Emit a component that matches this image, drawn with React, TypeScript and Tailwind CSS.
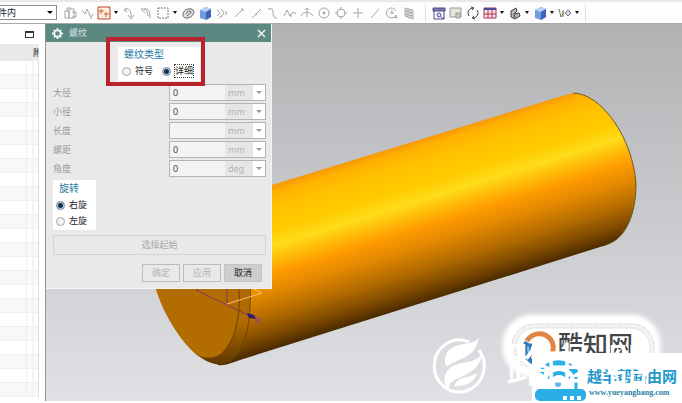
import { useState } from "react";
import type { ReactNode } from "react";

interface Field {
  id: string;
  label: string;
  value: string;
  unit: string;
}

const initialFields: Field[] = [
  { id: "major", label: "大径", value: "0", unit: "mm" },
  { id: "minor", label: "小径", value: "0", unit: "mm" },
  { id: "length", label: "长度", value: "", unit: "mm" },
  { id: "pitch", label: "螺距", value: "0", unit: "mm" },
  { id: "angle", label: "角度", value: "0", unit: "deg" },
];

const cube = (
  <>
    <path d="M2 4 8 1l5 2v8l-5 3-6-2z" fill="#6f9be0" />
    <path d="M2 4 8 1l5 2-5 3z" fill="#b9d2f6" />
    <path d="M8 6l5-3v8l-5 3z" fill="#3f63b8" />
  </>
);

interface Tool {
  name: string;
  color?: string;
  menu?: boolean;
  art: ReactNode;
}

const editTools: Tool[] = [
  { name: "移动组件", art: <path d="M2 5h4v7H2zM6 3h5v9H6zM4 5V2h4M9 6h4v5H9" /> },
  { name: "装配约束", art: <path d="M2 4l3 4 2-5 3 6M9 8l2 3 2-3M11 11v2" /> },
  {
    name: "捕捉点",
    color: "#b8442c",
    menu: true,
    art: (
      <>
        <path d="M1 1h12v12H1z" fill="#fdeee0" />
        <path d="M4 3v5M2 5h5M9 6v5M7 8h5" stroke="#c4682a" />
      </>
    ),
  },
  { name: "旋转", art: <path d="M2 4c4-3 8 0 7 7M6 9l3 4 3-4M2 4l3-2M2 4l3 2" /> },
  { name: "返回", art: <path d="M2 3h6c2 0 3 3 3 9M2 3l4 4M5 3c3 1 4 4 4 7" /> },
  { name: "矩形选择", menu: true, art: <path d="M2 2h10v10H2z" strokeDasharray="2 1" stroke="#777" /> },
  {
    name: "着色",
    color: "#666",
    art: (
      <>
        <path d="M2 8c0-4 7-7 10-4s-2 8-6 8-4-2-4-4z" fill="#ddd" />
        <path d="M5 8c1-3 5-4 5-2S7 8 6 10" />
      </>
    ),
  },
  { name: "实体", color: "none", art: cube },
  { name: "点集", art: <path d="M2 4l3 3-3 3M6 3l3 4-3 4M10 5l2 2-2 2M4 12l2-2" /> },
  { name: "端点", art: <path d="M3 11l7-7M9 3h2v2" /> },
  { name: "中点", art: <path d="M3 12l9-9M6 8l2 1" /> },
  { name: "控制点", art: <path d="M3 3c4-1 4 1 4 4s1 5 4 5M3 2v2" /> },
  { name: "样条", art: <path d="M1 10l3-6 3 6 3-4 3 2M6 9h2v2" /> },
  { name: "交点", art: <path d="M1 10c2-5 9-5 12 0M7 2v9M5 4l2-2 2 2" /> },
  {
    name: "圆心",
    art: (
      <>
        <circle cx="7" cy="7" r="5" />
        <circle cx="7" cy="7" r="1" fill="#777" />
      </>
    ),
  },
  {
    name: "象限点",
    art: (
      <>
        <circle cx="7" cy="7" r="4" />
        <path d="M7 1v3M7 10v3M1 7h3M10 7h3" strokeWidth="1" />
      </>
    ),
  },
  { name: "现有点", art: <path d="M7 2v10M2 7h10" /> },
  { name: "曲线上的点", art: <path d="M3 12l8-9" /> },
  {
    name: "面上的点",
    art: (
      <>
        <path d="M11 9a5 5 0 1 1 0-4M11 9l1 3-3-1" />
        <path d="M5 7h4M7 4v4" />
      </>
    ),
  },
  { name: "边界栅格", art: <path d="M3 2v8l8 3V4zM5 3v8M7 3v9M9 4v8M3 5l8 2M3 8l8 2" /> },
];

const viewTools: Tool[] = [
  {
    name: "适合窗口",
    color: "#4a4a86",
    art: (
      <>
        <path d="M1 2h12v3H1z" fill="#7a7ab0" />
        <path d="M2 5v8h10V5" />
        <circle cx="7" cy="9" r="2" fill="#cfe0ff" />
        <path d="M9 11l3 2" />
      </>
    ),
  },
  {
    name: "缩放",
    color: "#999",
    art: (
      <>
        <path d="M1 2h11v9H1z" fill="#e6e6dc" />
        <path d="M7 7h4v5H7z" fill="#c9d0a8" />
      </>
    ),
  },
  { name: "刷新", color: "#444", art: <path d="M3 10a5 5 0 0 1 4-8M11 4a5 5 0 0 1-4 8M5 1l3 1-2 2M9 13l-3-1 2-2" /> },
  {
    name: "布局",
    color: "#a8354e",
    menu: true,
    art: (
      <>
        <path d="M1 2h12v10H1z" fill="#fbe3e8" />
        <path d="M1 3h12" stroke="#4c4c96" strokeWidth="2" />
        <path d="M5 4v8M9 4v8M1 8h12" />
      </>
    ),
  },
  {
    name: "渲染样式",
    color: "#444",
    menu: true,
    art: (
      <>
        <path d="M3 5l5-3 1 3-3 3 5-1 1 3-5 3-4-2z" fill="#b5b5b5" />
        <path d="M6 8l1 4" />
      </>
    ),
  },
  { name: "定向视图", color: "none", menu: true, art: cube },
  {
    name: "显示和隐藏",
    color: "#777",
    menu: true,
    art: (
      <>
        <path d="M1 3l2 8 3-5M5 4v7" stroke="#6b7f4f" />
        <path d="M7 7l3-3 3 3-3 3z" fill="#d8d8e4" />
      </>
    ),
  },
];

function ToolButton({ tool }: { tool: Tool }) {
  return (
    <>
      <button aria-label={tool.name} className="flex w-[17px] justify-center">
        <svg width="14" height="14" viewBox="0 0 14 14" fill="none" stroke={tool.color ?? "#a6a6a6"}>
          {tool.art}
        </svg>
      </button>
      {tool.menu && (
        <button aria-label={tool.name + "选项"} className="flex w-2 items-center justify-center">
          <svg width="4" height="3" viewBox="0 0 4 3" fill="#111">
            <path d="M0 0h4L2 3z" />
          </svg>
        </button>
      )}
    </>
  );
}

function Toolbar() {
  return (
    <header className="flex h-6 items-center overflow-hidden border-t-2 border-b border-t-[#ebe9e8] border-b-[#a9a9a9] bg-[#fdfdfd]">
      <div className="relative -ml-3 flex shrink-0">
        <select
          aria-label="选择范围"
          className="h-[15px] w-[69px] appearance-none border border-[#8c8c8c] bg-white text-[9px] leading-3 text-[#222]"
        >
          <option>部件内</option>
          <option>整个装配</option>
        </select>
        <svg className="pointer-events-none absolute top-1.5 right-1" width="6" height="3" viewBox="0 0 6 3">
          <path d="M0 0h6L3 3z" />
        </svg>
      </div>
      <div className="ml-1 flex shrink-0 items-center">
        {editTools.map((t) => (
          <ToolButton key={t.name} tool={t} />
        ))}
      </div>
      <div className="ml-2 flex h-4 shrink-0 items-center border-x border-[#dcdcdc] px-1">
        {viewTools.map((t) => (
          <ToolButton key={t.name} tool={t} />
        ))}
      </div>
    </header>
  );
}

function Navigator() {
  return (
    <aside className="flex w-[46px] shrink-0 flex-col border-r border-[#8f9694] bg-white">
      <div className="flex h-5 items-center justify-end pr-[11px]">
        <button aria-label="最大化" className="h-[7px] w-[9px] border border-t-2 border-[#333]" />
      </div>
      <div className="mr-1.5 flex h-[17px] items-center justify-end overflow-hidden bg-[#e9e9e9] text-[9px] text-[#222]">
        <span className="w-1.5 overflow-hidden">附</span>
      </div>
      <div className="mr-1.5 border-r border-[#dedede]">
        {Array.from({ length: 24 }).map((_, i) => (
          <div key={i} className="flex h-3.5 justify-end border-b border-[#efefef] even:bg-[#f8f8f8]">
            <span className="w-1.5 border-l border-[#efefef]" />
            <span className="w-1.5 border-l border-[#efefef]" />
          </div>
        ))}
      </div>
    </aside>
  );
}

interface ChoiceProps {
  name: string;
  label: string;
  checked: boolean;
  onSelect: () => void;
  focused?: boolean;
}

function Choice({ name, label, checked, onSelect, focused }: ChoiceProps) {
  return (
    <label className="flex items-center gap-[3px] text-[9px] leading-3 whitespace-nowrap text-[#222]">
      <input
        type="radio"
        name={name}
        checked={checked}
        onChange={onSelect}
        className="size-[9px] shrink-0 appearance-none rounded-full border border-[#a5a5a5] bg-[#f1f1f1] checked:border-[#6e8ba6] checked:bg-[radial-gradient(circle,#16304a_0_2px,#b9d0e2_3px)]"
      />
      <span className={focused ? "border border-dotted border-[#444]" : "border border-transparent"}>{label}</span>
    </label>
  );
}

function ThreadDialog() {
  const [fields, setFields] = useState(initialFields);
  const [type, setType] = useState("详细");
  const [rotation, setRotation] = useState("右旋");

  const updateField = (id: string, value: string) => {
    setFields(fields.map((f) => (f.id === id ? { ...f, value } : f)));
  };

  return (
    <section
      aria-label="螺纹"
      className="absolute top-0 left-0 w-[226px] border-r border-b border-[#f4f4f4] bg-[#e9e9e9]"
    >
      <div className="flex h-[18px] items-center bg-[#5b8880] pr-[5px] pl-1.5 text-[#f2f6f5]">
        <svg width="11" height="11" viewBox="0 0 12 12" fill="none" stroke="currentColor">
          <circle cx="6" cy="6" r="3.500" strokeWidth="2" />
          <path d="M6 0v2M6 10v2M0 6h2M10 6h2M2 2l1 1M9 9l1 1M10 2L9 3M2 10l1-1" strokeWidth="2" />
        </svg>
        <h1 className="ml-1.5 flex-1 text-[9px] text-[#d5e3e0]">螺纹</h1>
        <button aria-label="关闭">
          <svg width="9" height="9" viewBox="0 0 9 9" fill="none" stroke="currentColor" strokeWidth="1.500">
            <path d="M1 1l7 7M8 1L1 8" />
          </svg>
        </button>
      </div>

      <form className="pt-[5px] pr-[5px] pb-1.5 pl-[7px]" onSubmit={(e) => e.preventDefault()}>
        <fieldset className="ml-[65px] h-[34px] w-[82px] bg-white pl-1">
          <legend className="float-left w-full pl-0.5 text-[10px] leading-[14px] text-[#2a7ba5]">螺纹类型</legend>
          <div className="clear-both flex items-center gap-2 pt-[3px]">
            <Choice name="type" label="符号" checked={type === "符号"} onSelect={() => setType("符号")} />
            <Choice name="type" label="详细" checked={type === "详细"} onSelect={() => setType("详细")} focused />
          </div>
        </fieldset>

        <div className="mt-[3px] flex flex-col gap-0.5 pb-[3px]">
          {fields.map((f) => (
            <div key={f.id} className="flex h-[17px] items-center">
              <label htmlFor={f.id} className="flex-1 text-[9px] text-[#9c9c9c]">
                {f.label}
              </label>
              <div className="flex h-[17px] w-[97px] border border-[#b4b4b4] bg-[#f3f3f3]">
                <input
                  id={f.id}
                  value={f.value}
                  onChange={(e) => updateField(f.id, e.target.value)}
                  className="w-0 flex-1 pl-[3px] text-[9px] leading-3 text-[#444]"
                />
                <span className="w-7 bg-[#e6e6e6] pl-[3px] text-[9px] leading-[16px] text-[#b3b3b3]">{f.unit}</span>
                <button type="button" aria-label={f.label + "选项"} className="flex w-3 items-center justify-center bg-white">
                  <svg width="6" height="3" viewBox="0 0 6 3" fill="#999">
                    <path d="M0 0h6L3 3z" />
                  </svg>
                </button>
              </div>
            </div>
          ))}
        </div>

        <fieldset className="h-[50px] w-[43px] bg-white pl-[3px]">
          <legend className="float-left w-full pl-[3px] text-[10px] leading-4 text-[#2a7ba5]">旋转</legend>
          <div className="clear-both flex flex-col gap-0.5 pt-0.5">
            <Choice name="rotation" label="右旋" checked={rotation === "右旋"} onSelect={() => setRotation("右旋")} />
            <Choice name="rotation" label="左旋" checked={rotation === "左旋"} onSelect={() => setRotation("左旋")} />
          </div>
        </fieldset>

        <button type="button" className="mt-[3px] h-5 w-full border border-[#d2d2d2] text-[9px] text-[#a8a8a8]">
          选择起始
        </button>
        <div className="mt-[9px] flex justify-end gap-[3px] pr-1">
          <button type="button" className="h-[18px] w-[38px] border border-[#bcbcbc] text-[9px] text-[#b5b5b5]">
            确定
          </button>
          <button type="button" className="h-[18px] w-[38px] border border-[#bcbcbc] text-[9px] text-[#b5b5b5]">
            应用
          </button>
          <button type="button" className="h-[18px] w-[38px] border border-[#c4c4c4] bg-[#cdcdcd] text-[9px] text-[#222]">
            取消
          </button>
        </div>
      </form>

      {/* red highlight around the thread type */}
      <div className="pointer-events-none absolute top-[13px] left-[60px] h-[49px] w-[99px] border-4 border-[#b8232d]" />
    </section>
  );
}

function Model() {
  return (
    <svg viewBox="46 24 636 377" className="block w-full" aria-label="圆柱模型">
      <defs>
        <linearGradient id="sky" x1="0" y1="0" x2="0" y2="1">
          <stop offset="0" stopColor="#b1b2b4" />
          <stop offset="1" stopColor="#dfe1e4" />
        </linearGradient>
        <linearGradient id="body" gradientUnits="userSpaceOnUse" x1="540" y1="103" x2="586" y2="251">
          <stop offset="0" stopColor="#f79a08" />
          <stop offset="0.04" stopColor="#ffb000" />
          <stop offset="0.12" stopColor="#ffbf00" />
          <stop offset="0.28" stopColor="#ffcc00" />
          <stop offset="0.37" stopColor="#ffdc1a" />
          <stop offset="0.45" stopColor="#ffbd08" />
          <stop offset="0.54" stopColor="#ff9b00" />
          <stop offset="0.66" stopColor="#e08600" />
          <stop offset="0.8" stopColor="#b06a00" />
          <stop offset="0.93" stopColor="#764400" />
          <stop offset="1" stopColor="#4c2c00" />
        </linearGradient>
        <linearGradient id="rim" x1="0" y1="0" x2="0" y2="1">
          <stop offset="0.6" stopColor="#b06a00" />
          <stop offset="1" stopColor="#5c3600" />
        </linearGradient>
        <filter id="glow" x="-20%" y="-30%" width="140%" height="160%">
          <feGaussianBlur stdDeviation="2" />
        </filter>
      </defs>
      <rect x="46" y="24" width="636" height="377" fill="url(#sky)" />

      <path
        d="M218 365C225 366 231 363 240 360L600 247C626 242 636 214 636 184C633 138 601 93 573 93L562 96L200 207L200 300z"
        fill="url(#body)"
      />
      <path d="M573 93C601 93 633 138 636 184C636 214 626 240 605 245" fill="none" stroke="#6b5a1c" />
      <path d="M150 260C154 300 176 337 197 355C210 364 218 367 230 362C247 346 252 315 249 270z" fill="url(#rim)" />
      <path d="M150 260C154 300 176 337 197 355C209 360 217 357 223 352C239 336 243 300 236 270z" fill="#b36c00" />
      <path d="M236 270C243 300 239 336 223 352M249 270C253 315 248 346 230 362" fill="none" stroke="#6b4608" />

      <g fill="none">
        <path d="M227 280V304M196 290L252 317M196 290L206 284" stroke="#7d3a6a" />
        <path d="M227 304L262 293L250 287" stroke="#ffbe78" />
        <path d="M247 313l7 2 2 4-7-1z" fill="#2c1a70" />
        <path d="M256 317l4 7M261 318l-6 5" stroke="#7b3f9e" />
      </g>

      <rect x="506" y="318" width="151" height="56" rx="26" fill="#fff" stroke="#fff" strokeWidth="7" filter="url(#glow)" />
      <rect x="512" y="324" width="142" height="46" rx="22" fill="#f3f3f3" stroke="#dcdcdc" strokeDasharray="5 1" />
      <rect x="516" y="328" width="134" height="40" rx="19" fill="#fff" stroke="#e2e2e2" />
      <g fill="none" strokeWidth="5">
        <path d="M527 341A14 14 0 1 1 546 360" stroke="#e08545" />
        <path d="M527 342c-5 8 0 18 8 21" stroke="#2f7dbd" />
        <path d="M524 345h8M530 345v12" stroke="#2f7dbd" strokeWidth="3" />
      </g>
      <text x="558" y="354" className="text-[25px] font-medium" fill="#454545">
        酷知网
      </text>

      <rect x="532" y="353" width="150" height="50" fill="#fff" />
      <g fill="none" stroke="#2aaee6">
        <path d="M541 373C550 360 567 360 576 373" strokeWidth="6" />
        <path d="M549 379C554 371 564 371 569 379" strokeWidth="4" />
        <path d="M576 377v14" strokeWidth="3" />
      </g>
      <circle cx="558" cy="384" r="3" fill="#63b5df" />
      <rect x="535" y="389" width="51" height="12" rx="5" fill="#2aaee6" />
      <path d="M563 396h4v4h-4zM570 396h4v4h-4zM577 396h4v4h-4z" fill="#fff" />
      <text x="587" y="382" className="text-[15px] font-bold" fill="#2398c9">
        越羊帮路由网
      </text>
      <text x="589" y="395" className="font-['Liberation_Serif',serif] text-[8px] font-bold" fill="#1f7fa6">
        www.yueyangbang.com
      </text>

      <text y="381" className="text-[46px]" fill="#fff">
        <tspan x="506">路</tspan>
        <tspan x="544">由</tspan>
        <tspan x="605">器</tspan>
      </text>
      <path d="M469 342A25 26 0 1 0 479 350" fill="none" stroke="#fff" strokeWidth="3" />
      <path
        d="M479 338C474 346 451 341 446 355C444 360 445 364 447 367C456 357 473 362 479 338zM482 354C474 366 453 359 446 373C443 380 445 387 449 390C446 374 478 381 482 354zM477 373C468 379 458 376 454 386C459 386 474 386 477 373z"
        fill="#fff"
      />
    </svg>
  );
}

export default function App() {
  return (
    <div className="bg-white font-['Noto_Sans','Noto_Sans_CJK_SC',sans-serif]">
      <Toolbar />
      <main className="flex">
        <Navigator />
        <div className="relative min-w-0 flex-1">
          <Model />
          <ThreadDialog />
        </div>
      </main>
    </div>
  );
}
